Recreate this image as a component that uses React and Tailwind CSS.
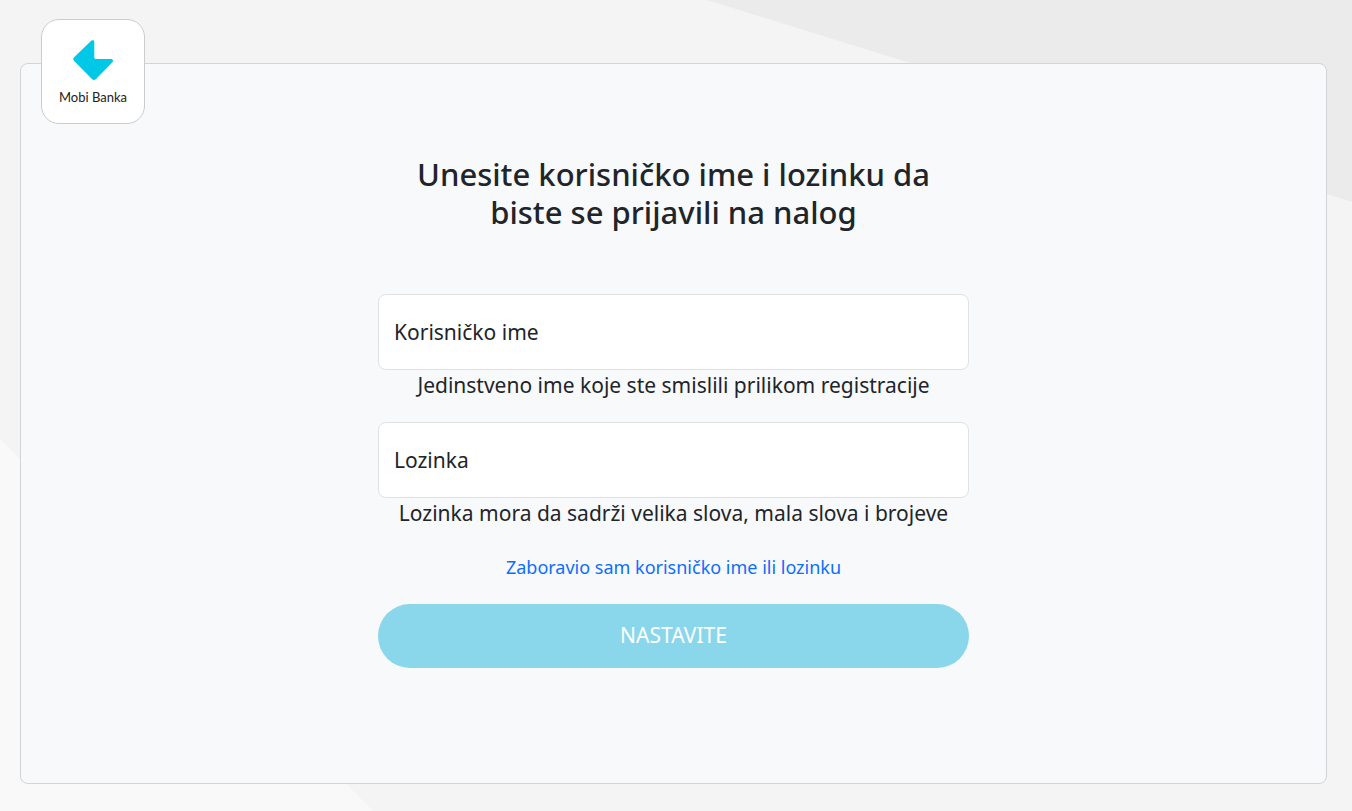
import { useState } from "react";

const fields = [
  {
    name: "username",
    type: "text",
    label: "Korisničko ime",
    hint: "Jedinstveno ime koje ste smislili prilikom registracije",
  },
  {
    name: "password",
    type: "password",
    label: "Lozinka",
    hint: "Lozinka mora da sadrži velika slova, mala slova i brojeve",
  },
];

function Background() {
  return (
    <svg
      className="absolute inset-0 -z-10 h-full w-full"
      viewBox="0 0 1352 811"
      preserveAspectRatio="none"
      aria-hidden="true"
    >
      <path d="M0 0H1352V811H0Z" fill="#f4f4f4" />
      <path d="M707 0H1352V202L910 63Z" fill="#ebebeb" />
      <path d="M0 439L373 811H0Z" fill="#f9f9f9" />
    </svg>
  );
}

function Logo() {
  return (
    <div className="absolute -top-[45px] left-5 flex h-[105px] w-[104px] flex-col items-center rounded-[18px] border border-[#cbccce] bg-white pt-5">
      <svg className="h-10 w-10" viewBox="0 0 40 40" aria-hidden="true">
        <path
          d="M18.5 .6C19.8-.3 21.3.3 21.3 2V17.6Q21.3 19 22.7 19H38C40 19 40.6 20.8 39.4 22.2L22.8 39.2Q21 40.8 19.2 39.2L.9 20.7Q-.4 19 .9 17.5Z"
          fill="#00c8e6"
        />
      </svg>
      <span className="mt-2 font-['Lato',sans-serif] text-[13px] leading-[18px] whitespace-nowrap text-[#222222]">
        Mobi Banka
      </span>
    </div>
  );
}

export default function App() {
  const [formData, setFormData] = useState({ username: "", password: "" });

  const handleChange = (e) => {
    const { name, value } = e.target;
    setFormData((prev) => ({ ...prev, [name]: value }));
  };

  const handleSubmit = (e) => {
    e.preventDefault();
  };

  return (
    <div className="relative isolate flex min-h-screen flex-col pt-[63px] pr-[25px] pb-[27px] pl-5 font-['Noto_Sans',sans-serif] text-[#212529]">
      <Background />

      <main className="relative flex grow flex-col items-center rounded-lg border border-[#d2d4d7] bg-[#f8f9fb] px-4 pt-[91px] pb-20">
        <Logo />

        <form
          onSubmit={handleSubmit}
          className="flex w-full max-w-[591px] flex-col text-center"
        >
          <h1 className="mx-auto mb-[63px] max-w-[540px] text-[31px] leading-[38px] font-medium">
            Unesite korisničko ime i lozinku da biste se prijavili na nalog
          </h1>

          {fields.map(({ name, type, label, hint }) => (
            <div key={name} className="mb-[22px]">
              <div className="relative">
                <input
                  id={name}
                  name={name}
                  type={type}
                  value={formData[name]}
                  onChange={handleChange}
                  placeholder=" "
                  aria-describedby={`${name}-hint`}
                  className="peer block h-[76px] w-full rounded-lg border border-[#dee2e6] bg-white px-4 pt-5 text-[21px] focus:border-[#86b7fe] focus:outline-none"
                />
                <label
                  htmlFor={name}
                  className="pointer-events-none absolute top-2 left-4 text-sm peer-placeholder-shown:inset-y-0 peer-placeholder-shown:flex peer-placeholder-shown:items-center peer-placeholder-shown:text-[21px]"
                >
                  {label}
                </label>
              </div>
              <p id={`${name}-hint`} className="text-[21px] leading-[30px]">
                {hint}
              </p>
            </div>
          ))}

          <a
            href="#"
            className="mx-auto mt-0.5 text-[18px] leading-[30px] text-[#0d6efd] hover:underline"
          >
            Zaboravio sam korisničko ime ili lozinku
          </a>

          <button
            type="submit"
            className="mt-[22px] h-16 rounded-full bg-[#8ad7ec] text-[21px] text-white transition hover:bg-[#6fcde6]"
          >
            NASTAVITE
          </button>
        </form>
      </main>
    </div>
  );
}
